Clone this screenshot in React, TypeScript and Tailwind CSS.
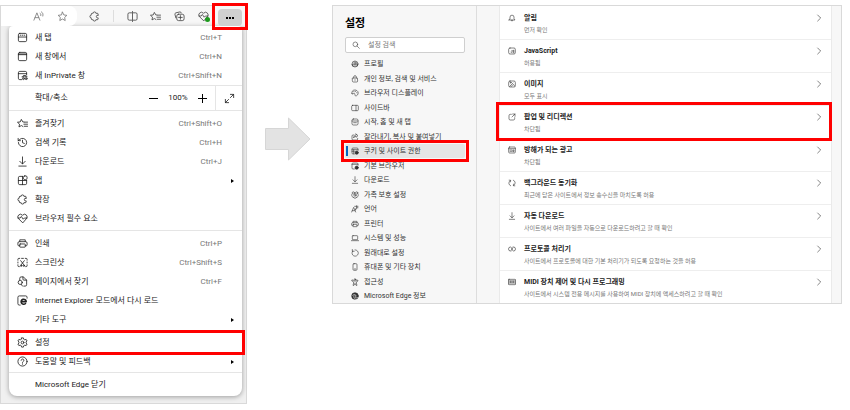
import type { ReactNode } from "react";
import { clsx } from "clsx";

// Line drawings on a 24x24 canvas
const icons: Record<string, ReactNode> = {
  tab: (
    <>
      <rect x="3" y="3" width="18" height="18" rx="3" />
      <path d="M3 11h18M7 7h1M11 7h2M16 7h1" />
    </>
  ),
  window: (
    <>
      <rect x="3" y="3" width="18" height="18" rx="3" />
      <path d="M3 6.5h18M3 8h18" />
    </>
  ),
  inprivate: (
    <>
      <path d="M10 21H6a3 3 0 0 1-3-3V6a3 3 0 0 1 3-3h12a3 3 0 0 1 3 3v5M3 8h18" />
      <path d="M11 15h11M13 15l1-3h5l1 3" />
      <circle cx="14" cy="19" r="2" />
      <circle cx="20" cy="19" r="2" />
    </>
  ),
  favorites: (
    <path d="M15 8.800 12.500 8.400 9.500 3 7 8.600l-6 .7 4.500 4.100L4.300 19.500l5.200-3 3.500 2M16 9h7M15 13.500h8M16 18h7" />
  ),
  history: (
    <>
      <path d="M3 12a9 9 0 1 0 3-6.700L2.500 8" />
      <path d="M2.500 3v5h5M12 7v5.500l4 1.500" />
    </>
  ),
  download: <path d="M12 2v15M6 11.500l6 6 6-6M4 22h16" />,
  apps: (
    <>
      <path d="M12 3H6a3 3 0 0 0-3 3v12a3 3 0 0 0 3 3h12a3 3 0 0 0 3-3v-6M12 3v18M3 12h18" />
      <rect x="14" y="2" width="8" height="8" rx="3" />
    </>
  ),
  extension: (
    <path d="M20 9V7a2 2 0 0 0-2-2h-3a3 3 0 0 0-6 0H7a2 2 0 0 0-2 2v2a3 3 0 0 0 0 6v2a2 2 0 0 0 2 2h2a3 3 0 0 0 6 0h3a2 2 0 0 0 2-2v-2h-1a3 3 0 0 1 0-6z" />
  ),
  heart: (
    <>
      <path d="M12 21 3.500 12.500a5.600 5.600 0 0 1 8-8l.5.5.5-.5a5.600 5.600 0 0 1 8 8z" />
      <path d="M2 11h5l2.500-3.500 4 6L16 11h6" />
    </>
  ),
  printer: (
    <>
      <path d="M6 8V4h12v4M6 17H4a2 2 0 0 1-2-2v-4a3 3 0 0 1 3-3h14a3 3 0 0 1 3 3v4a2 2 0 0 1-2 2h-2" />
      <rect x="6" y="13" width="12" height="7" rx="1" />
    </>
  ),
  screenshot: (
    <>
      <path d="M2 7V5a2 2 0 0 1 2-2h2M10 3h4M18 3h2a2 2 0 0 1 2 2v2M22 11v2M2 11v2M2 17v2a2 2 0 0 0 2 2h1M22 17v2a2 2 0 0 1-2 2h-1" />
      <path d="M8 8l7 9M16 8l-7 9" />
      <circle cx="9" cy="19" r="1.500" />
      <circle cx="15" cy="19" r="1.500" />
    </>
  ),
  find: (
    <>
      <path d="M6 8V5a3 3 0 0 1 3-3h5l7 7v10a3 3 0 0 1-3 3h-3M13 2v5a2 2 0 0 0 2 2h6" />
      <circle cx="7" cy="14" r="4.500" />
      <path d="M9 18l3 4" />
    </>
  ),
  ie: (
    <>
      <path d="M7 22H5a3 3 0 0 1-3-3V5a3 3 0 0 1 3-3h14a3 3 0 0 1 3 3v2" />
      <path strokeWidth="3.500" d="M9 14.500h11a5.500 5.500 0 1 0-1.500 4" />
    </>
  ),
  settings: (
    <>
      <path d="M10 2h4l.7 3 2.200 1.200L20 5.300l2 3.400-2.300 2v2.600l2.300 2-2 3.400-3.100-.9-2.200 1.200L14 22h-4l-.7-3-2.200-1.200-3.100.9-2-3.400 2.300-2v-2.600L2 8.700l2-3.400 3.100.9L9.300 5z" />
      <circle cx="12" cy="12" r="3" />
    </>
  ),
  help: (
    <>
      <circle cx="12" cy="12" r="10" />
      <path d="M9 9.500a3 3 0 1 1 4.500 2.600c-1 .6-1.500 1-1.500 2.400M12 17v1" />
    </>
  ),
  star: (
    <path d="m12 2.500 2.900 6.100 6.600.9-4.800 4.600 1.200 6.700-5.900-3.300-5.900 3.300 1.200-6.700-4.800-4.600 6.600-.9z" />
  ),
  readAloud: (
    <path d="M2 20 8.500 4 15 20M4.500 14.500h8M15.500 5c1.500 1 2 2.500 1.500 5M18.500 2c3 2 4 5 3 9" />
  ),
  split: (
    <path d="M10 4H5a3 3 0 0 0-3 3v10a3 3 0 0 0 3 3h5M14 4h5a3 3 0 0 1 3 3v10a3 3 0 0 1-3 3h-5M12 1v22" />
  ),
  collections: (
    <>
      <path d="M4 15 2 7a3 3 0 0 1 2-3l9-2a3 3 0 0 1 3 2" />
      <rect x="6" y="7" width="16" height="14" rx="4" />
      <path d="M14 10v8M10 14h8" />
    </>
  ),
  search: (
    <>
      <circle cx="10" cy="10" r="7" />
      <path d="m15 15 7 7" />
    </>
  ),
  profile: (
    <>
      <circle cx="12" cy="12" r="9" />
      <circle cx="12" cy="9" r="3.500" />
      <path d="M4 13h16l-1 5H6z" />
    </>
  ),
  lock: (
    <path d="M5 9h14l1 9a3 3 0 0 1-3 3H7a3 3 0 0 1-3-3zM8 9V6a4 4 0 0 1 8 0v3M12 14v2" />
  ),
  appearance: (
    <>
      <path d="M3 14C1 7 6 2 13 3c7 1 10 7 8 12-2 6-8 7-9 4-1-2 1-5-2-6-3 0-5 4-7 1z" />
      <path d="M8 8h1M13 7h1M17 11h1" />
    </>
  ),
  sidebar: (
    <>
      <rect x="2" y="4" width="20" height="16" rx="3" />
      <path d="M15 4v16" />
    </>
  ),
  start: (
    <>
      <rect x="3" y="3" width="18" height="18" rx="4" />
      <path d="M3 9h18M8 14h8" />
    </>
  ),
  share: (
    <path d="M9 6H6a3 3 0 0 0-3 3v9a3 3 0 0 0 3 3h11a3 3 0 0 0 3-3v-2M15 3l6 5-6 5v-3c-4 0-6 2-7 5 0-5 2-8 7-9z" />
  ),
  cookies: (
    <>
      <path d="M10 21H6a3 3 0 0 1-3-3V6a3 3 0 0 1 3-3h12a3 3 0 0 1 3 3v4M3 8h18M3 13h7M8 8v12" />
      <circle cx="17" cy="17" r="5" fill="currentColor" />
    </>
  ),
  browser: (
    <>
      <path d="M10 21H6a3 3 0 0 1-3-3V6a3 3 0 0 1 3-3h12a3 3 0 0 1 3 3v4M3 7h18" />
      <circle cx="17" cy="17" r="5" fill="currentColor" />
    </>
  ),
  family: (
    <>
      <circle cx="7" cy="6" r="3.500" />
      <circle cx="17" cy="6" r="3.500" />
      <circle cx="12" cy="13" r="3" />
      <path d="M2 11c0 5 2 8 5 8M22 11c0 5-2 8-5 8M7 19c2 4 8 4 10 0" />
    </>
  ),
  language: (
    <path d="M2 21 8 7l6 14M4 17h8M11 4h10M17 2v9c-1 2-2 3-4 3M21 8c-4-1-7 1-7 4" />
  ),
  laptop: (
    <>
      <rect x="4" y="5" width="16" height="12" rx="2" />
      <path d="M1 20h22" />
    </>
  ),
  reset: <path d="M5 6a9.500 9.500 0 1 0 7-3.500M4 1.500V7h5.500" />,
  phone: (
    <>
      <rect x="6" y="2" width="12" height="20" rx="3" />
      <path d="M10 18h4" />
    </>
  ),
  accessibility: (
    <>
      <circle cx="12" cy="4.500" r="2.500" />
      <path d="M4 6l5 3h6l5-3 1 3-5 3v3l2 7h-3l-3-6-3 6H6l2-7v-3L3 9z" />
    </>
  ),
  edge: (
    <>
      <circle cx="12" cy="12" r="10" fill="currentColor" />
      <path
        stroke="#fff"
        d="M5 10c4-4 10-3 10 2 0 2-2 2-2 4 1 2 5 2 7 1M9 11c-2 4 0 8 4 10"
      />
    </>
  ),
  bell: (
    <path d="M3 18h18l-3-4V9.500a6 6 0 0 0-12 0V14zM9.500 18.500a2.500 2.500 0 0 0 5 0" />
  ),
  script: (
    <>
      <rect x="2" y="3" width="20" height="18" rx="4" />
      <path d="M12 10v5a2 2 0 0 1-3 1M18 10h-3v3h3v4h-3" />
    </>
  ),
  image: (
    <>
      <rect x="2" y="3" width="20" height="18" rx="4" />
      <path d="m5 19 10-10M9 20l7-7 4 5" />
      <circle cx="8" cy="8" r="1.500" />
    </>
  ),
  popup: (
    <path d="M10 4H7a4 4 0 0 0-4 4v9a4 4 0 0 0 4 4h9a4 4 0 0 0 4-4v-3M14 3h7v7M21 3l-9 9" />
  ),
  ads: (
    <>
      <rect x="2" y="3" width="20" height="18" rx="3" />
      <path d="M2 8h20M6 12h6M6 16h6M16 12h2v5h-2z" />
    </>
  ),
  sync: (
    <path d="M8 20.500A9 9 0 0 1 7 4.500M3.500 3.500 8 4l-.5 4.500M16 3.500a9 9 0 0 1 1 16M20.500 20.500 16 20l.5-4.500" />
  ),
  protocol: (
    <path d="M9 18H7.500a6 6 0 0 1 0-12c5 0 4 12 9 12a6 6 0 0 0 0-12H15M14 8c-2 2-2 6-4 8" />
  ),
  midi: (
    <>
      <rect x="1" y="4" width="22" height="16" rx="2" />
      <path d="M1 9h22M7 9v5M12 9v5M17 9v5M1 15h22" />
    </>
  ),
  expand: <path d="M14 3h7v7M21 3l-7 7M10 21H3v-7M3 21l7-7" />,
  chevron: <path d="m8 3 9 9-9 9" />,
};

function Icon({ name, className }: { name: string; className?: string }) {
  return (
    <svg
      viewBox="0 0 24 24"
      fill="none"
      stroke="currentColor"
      strokeWidth="1.8"
      strokeLinecap="round"
      strokeLinejoin="round"
      aria-hidden="true"
      className={clsx("shrink-0", className)}
    >
      {icons[name]}
    </svg>
  );
}

interface MenuItem {
  label: string;
  icon?: string;
  shortcut?: string;
  submenu?: boolean;
  marked?: boolean;
}

const tabItems: MenuItem[] = [
  { icon: "tab", label: "새 탭", shortcut: "Ctrl+T" },
  { icon: "window", label: "새 창에서", shortcut: "Ctrl+N" },
  { icon: "inprivate", label: "새 InPrivate 창", shortcut: "Ctrl+Shift+N" },
];

const pageItems: MenuItem[] = [
  { icon: "favorites", label: "즐겨찾기", shortcut: "Ctrl+Shift+O" },
  { icon: "history", label: "검색 기록", shortcut: "Ctrl+H" },
  { icon: "download", label: "다운로드", shortcut: "Ctrl+J" },
  { icon: "apps", label: "앱", submenu: true },
  { icon: "extension", label: "확장" },
  { icon: "heart", label: "브라우저 필수 요소" },
];

const toolItems: MenuItem[] = [
  { icon: "printer", label: "인쇄", shortcut: "Ctrl+P" },
  { icon: "screenshot", label: "스크린샷", shortcut: "Ctrl+Shift+S" },
  { icon: "find", label: "페이지에서 찾기", shortcut: "Ctrl+F" },
  { icon: "ie", label: "Internet Explorer 모드에서 다시 로드" },
  { label: "기타 도구", submenu: true },
];

const helpItems: MenuItem[] = [
  { icon: "settings", label: "설정", marked: true },
  { icon: "help", label: "도움말 및 피드백", submenu: true },
];

const closeItems: MenuItem[] = [{ label: "Microsoft Edge 닫기" }];

const navItems = [
  { icon: "profile", label: "프로필" },
  { icon: "lock", label: "개인 정보, 검색 및 서비스" },
  { icon: "appearance", label: "브라우저 디스플레이" },
  { icon: "sidebar", label: "사이드바" },
  { icon: "start", label: "시작, 홈 및 새 탭" },
  { icon: "share", label: "잘라내기, 복사 및 붙여넣기" },
  { icon: "cookies", label: "쿠키 및 사이트 권한", active: true },
  { icon: "browser", label: "기본 브라우저" },
  { icon: "download", label: "다운로드" },
  { icon: "family", label: "가족 보호 설정" },
  { icon: "language", label: "언어" },
  { icon: "printer", label: "프린터" },
  { icon: "laptop", label: "시스템 및 성능" },
  { icon: "reset", label: "원래대로 설정" },
  { icon: "phone", label: "휴대폰 및 기타 장치" },
  { icon: "accessibility", label: "접근성" },
  { icon: "edge", label: "Microsoft Edge 정보" },
];

const permissions = [
  { icon: "bell", title: "알림", detail: "먼저 확인" },
  { icon: "script", title: "JavaScript", detail: "허용됨" },
  { icon: "image", title: "이미지", detail: "모두 표시" },
  { icon: "popup", title: "팝업 및 리디렉션", detail: "차단됨", marked: true },
  { icon: "ads", title: "방해가 되는 광고", detail: "차단됨" },
  {
    icon: "sync",
    title: "백그라운드 동기화",
    detail: "최근에 닫은 사이트에서 정보 송수신을 마치도록 허용",
  },
  {
    icon: "download",
    title: "자동 다운로드",
    detail: "사이트에서 여러 파일을 자동으로 다운로드하려고 할 때 확인",
  },
  {
    icon: "protocol",
    title: "프로토콜 처리기",
    detail: "사이트에서 프로토콜에 대한 기본 처리기가 되도록 요청하는 것을 허용",
  },
  {
    icon: "midi",
    title: "MIDI 장치 제어 및 다시 프로그래밍",
    detail:
      "사이트에서 시스템 전용 메시지를 사용하여 MIDI 장치에 액세스하려고 할 때 확인",
  },
];

// Red frame drawn over the step to click
function Marker({ className }: { className: string }) {
  return (
    <span
      className={clsx(
        "pointer-events-none absolute z-10 border-3 border-[#ff0000]",
        className,
      )}
    />
  );
}

function MenuGroup({
  items,
  className,
}: {
  items: MenuItem[];
  className?: string;
}) {
  return (
    <ul className={className}>
      {items.map((item) => (
        <li key={item.label} className="relative">
          <button
            type="button"
            className="flex h-[19px] w-full items-center px-2 text-left"
          >
            <span className="flex w-[18px] shrink-0">
              {item.icon && <Icon name={item.icon} className="size-[11px]" />}
            </span>
            <span className="flex-1 whitespace-nowrap">{item.label}</span>
            {item.shortcut && (
              <span className="mr-3 text-[#777777]">{item.shortcut}</span>
            )}
            {item.submenu && (
              <span className="size-0 border-y-2 border-l-3 border-y-transparent border-l-black" />
            )}
          </button>
          {item.marked && <Marker className="-inset-[3px]" />}
        </li>
      ))}
    </ul>
  );
}

function ToolbarButton({
  name,
  label,
  badge,
}: {
  name: string;
  label: string;
  badge?: boolean;
}) {
  return (
    <button type="button" aria-label={label} className="relative">
      <Icon name={name} className="size-[11px]" />
      {badge && (
        <span className="absolute -right-px bottom-0 size-[5px] rounded-full bg-[#1c9a1c]" />
      )}
    </button>
  );
}

function BrowserWindow() {
  return (
    <section className="w-[247px] shrink-0 border border-[#d9d9d9] bg-[#f0f0f0] pb-[7px]">
      <div className="flex h-5 items-center bg-[#f7f7f7] text-[#444444]">
        <div className="flex h-5 w-[76px] items-center justify-end gap-[13px] rounded-r-lg bg-white pr-[9px] text-[#777777]">
          <ToolbarButton name="readAloud" label="소리내어 읽기" />
          <ToolbarButton name="star" label="즐겨찾기에 추가" />
        </div>
        <div className="flex flex-1 items-center justify-between pr-[9px] pl-3">
          <ToolbarButton name="extension" label="확장" />
          <span className="h-3 w-px bg-[#dddddd]" />
          <ToolbarButton name="split" label="화면 분할" />
          <ToolbarButton name="favorites" label="즐겨찾기" />
          <ToolbarButton name="collections" label="컬렉션" />
          <ToolbarButton name="heart" label="브라우저 필수 요소" badge />
        </div>
        <div className="relative mr-1 self-stretch pt-[3px]">
          <button
            type="button"
            aria-label="설정 및 기타"
            className="flex h-[17px] w-6 items-center justify-center gap-px rounded-sm bg-[#d0d0d0]"
          >
            <span className="size-0.5 bg-black" />
            <span className="size-0.5 bg-black" />
            <span className="size-0.5 bg-black" />
          </button>
          <Marker className="-inset-x-[6px] -top-[3px] -bottom-1" />
        </div>
      </div>

      <div className="mr-1 ml-2 divide-y divide-[#e5e5e5] rounded-lg rounded-t-sm bg-white text-[8px] leading-3 text-[#222222] shadow-[0_1px_5px_#00000059]">
        <MenuGroup items={tabItems} className="pt-0.5" />
        <div className="flex h-[25px] items-center pl-[26px]">
          <span className="flex-1">확대/축소</span>
          <button
            type="button"
            aria-label="축소"
            className="flex w-[9px] justify-center"
          >
            <span className="h-px w-[9px] bg-black" />
          </button>
          <span className="w-10 text-center">100%</span>
          <button type="button" aria-label="확대" className="relative size-[9px]">
            <span className="absolute inset-x-0 top-1 h-px bg-black" />
            <span className="absolute inset-y-0 left-1 w-px bg-black" />
          </button>
          <button
            type="button"
            aria-label="전체 화면"
            className="ml-2 flex h-full w-[27px] items-center justify-center border-l border-[#e5e5e5]"
          >
            <Icon name="expand" className="size-[11px]" />
          </button>
        </div>
        <MenuGroup items={pageItems} className="pt-[3px] pb-0.5" />
        <MenuGroup items={toolItems} className="pt-[3px] pb-0.5" />
        <MenuGroup items={helpItems} className="py-px" />
        <MenuGroup items={closeItems} className="py-0.5" />
      </div>
    </section>
  );
}

function SettingsWindow() {
  return (
    <section className="flex min-w-0 flex-1 border border-[#d9d9d9] bg-[#f7f7f7]">
      <div className="flex w-36 shrink-0 flex-col border-r border-[#dddddd] pt-[9px] pr-[11px] pl-3">
        <h1 className="text-[11px] leading-[18px] font-bold text-black">설정</h1>
        <label className="mt-1 flex h-4 items-center gap-2 rounded-xs border border-[#cfcfcf] bg-white px-1.5">
          <Icon name="search" className="size-2 text-[#444444]" />
          <input
            type="search"
            aria-label="설정 검색"
            placeholder="설정 검색"
            className="w-full min-w-0 text-[7px] leading-3 outline-none placeholder:text-[#777777]"
          />
        </label>
        <nav className="mt-1 flex-1">
          <ul className="flex h-full flex-col justify-between">
            {navItems.map((item) => (
              <li key={item.label} className="relative">
                <a
                  href="#"
                  className={clsx(
                    "flex h-3.5 items-center gap-[5px] pl-1.5 text-[7px] leading-3 whitespace-nowrap text-[#333333]",
                    item.active && "rounded-xs bg-[#e5e5e5]",
                  )}
                >
                  <Icon name={item.icon} className="size-2" />
                  {item.label}
                </a>
                {item.active && (
                  <>
                    <span className="absolute inset-y-0.5 left-px w-0.5 bg-[#0067c0]" />
                    <Marker className="-inset-1" />
                  </>
                )}
              </li>
            ))}
          </ul>
        </nav>
      </div>

      <ul className="mr-[9px] ml-[22px] min-w-0 flex-1 border-x border-[#eaeaea] bg-white pt-px">
        {permissions.map((item) => (
          <li
            key={item.title}
            className="relative border-b border-[#eeeeee] last:border-b-0"
          >
            <button
              type="button"
              className="flex w-full items-start px-2 pt-[5px] pb-1 text-left"
            >
              <Icon
                name={item.icon}
                className="mt-0.5 mr-2 size-2 text-[#333333]"
              />
              <span className="flex-1">
                <span className="block text-[7px] leading-3 font-bold text-[#222222]">
                  {item.title}
                </span>
                <span className="block text-[6px] leading-[11px] text-[#777777]">
                  {item.detail}
                </span>
              </span>
              <Icon name="chevron" className="mt-0.5 size-2 text-[#333333]" />
            </button>
            {item.marked && (
              <Marker className="-top-1 -right-px -bottom-[3px] -left-1" />
            )}
          </li>
        ))}
      </ul>
    </section>
  );
}

export default function App() {
  return (
    <main
      lang="ko"
      className="flex items-start bg-white pt-[5px] pr-2 pb-[5px] font-[Roboto,'Noto_Sans_CJK_KR',sans-serif]"
    >
      <BrowserWindow />
      <svg
        viewBox="0 0 46 44"
        aria-hidden="true"
        className="mt-28 mr-[21px] ml-[18px] h-11 w-[46px] shrink-0"
      >
        <path
          d="M.5 11.500h23V1L45 22 23.500 43V32.500H.5z"
          fill="#e3e3e3"
          stroke="#d6d6d6"
        />
      </svg>
      <SettingsWindow />
    </main>
  );
}
